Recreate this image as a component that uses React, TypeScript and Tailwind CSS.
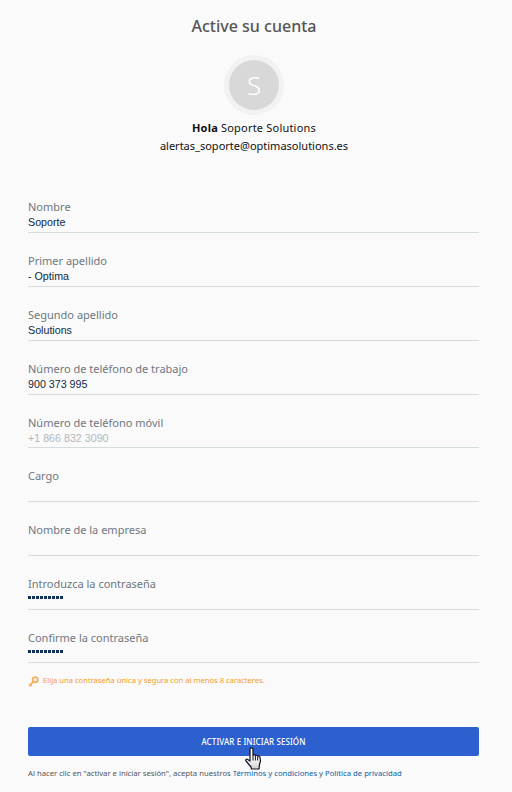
const FIELDS = [
  { label: "Nombre", value: "Soporte" },
  { label: "Primer apellido", value: "- Optima" },
  { label: "Segundo apellido", value: "Solutions" },
  { label: "Número de teléfono de trabajo", value: "900 373 995" },
  { label: "Número de teléfono móvil", placeholder: "+1 866 832 3090", short: true },
  { label: "Cargo" },
  { label: "Nombre de la empresa" },
  { label: "Introduzca la contraseña", password: true },
  { label: "Confirme la contraseña", password: true, short: true },
];

const Field: React.FC<{
  label: string;
  value?: string;
  placeholder?: string;
  password?: boolean;
  short?: boolean;
}> = ({ label, value, placeholder, password, short }) => (
  <div className={`${short ? "h-[53px]" : "h-[54px]"} pt-[20px] border-b border-[#d5dcdc] flex flex-col`}>
    <div className="h-[16px] leading-[16px] text-[11px] text-[#6f7780] font-['Noto_Sans',sans-serif]">
      {label}
    </div>
    <div className="h-[14px] leading-[14px] text-[10.7px] text-[#0f2a3f] font-['Liberation_Sans',sans-serif]">
      {value}
      {placeholder && <span className="text-[#b4b8bc]">{placeholder}</span>}
      {password && (
        <div className="flex gap-[1px] h-[14px] items-center pb-[4px]">
          {Array.from({ length: 9 }).map((_, i) => (
            <span key={i} className="w-[3px] h-[3px] bg-[#12305a]" />
          ))}
        </div>
      )}
    </div>
  </div>
);

const App = () => {
  return (
    <div className="relative w-[512px] h-[792px] overflow-hidden bg-[#fafafa] font-['Noto_Sans',sans-serif]">
      <div className="w-[508px]">
        <h1 className="pt-[16px] h-[55px] text-center text-[16px] leading-[20px] font-medium text-[#555555]">
          Active su cuenta
        </h1>
        <div className="flex justify-center">
          <div className="w-[60px] h-[60px] rounded-full bg-[#f2f2f2] flex items-center justify-center">
            <div className="w-[50px] h-[50px] rounded-full bg-[#d8d8d8] flex items-center justify-center text-white text-[26px] font-light">
              S
            </div>
          </div>
        </div>
        <p className="mt-[5px] text-center text-[11px] leading-[16px] text-[#111111] tracking-[0.2px]">
          <b className="font-bold">Hola</b> Soporte Solutions
        </p>
        <p className="mt-[2px] text-center text-[11px] leading-[16px] text-[#111111]">
          alertas_soporte@optimasolutions.es
        </p>
      </div>
      <div className="mt-[25px] mx-[28px] w-[451px]">
        {FIELDS.map((f) => (
          <Field key={f.label} {...f} />
        ))}
        <div className="mt-[12px] flex items-center gap-[4px] h-[12px] text-[7.6px] text-[#f59a23] font-['Noto_Sans',sans-serif]">
          <svg width="11" height="11" viewBox="0 0 11 11" fill="none" stroke="#f8ac5c" strokeWidth="1.8">
            <circle cx="7.2" cy="3.8" r="2.6" />
            <path d="M5.2 5.800 1 10M2.200 8.600l1.500 1.400" />
          </svg>
          <span>Elija una contraseña única y segura con al menos 8 caracteres.</span>
        </div>
        <button className="mt-[40px] w-full h-[29px] rounded-[2px] bg-[#2b60ce] text-white text-[8px] tracking-[0.1px] font-medium flex items-center justify-center">
          ACTIVAR E INICIAR SESIÓN
        </button>
        <p className="mt-[11px] whitespace-nowrap text-[7.7px] leading-[12px] text-[#555555]">
          Al hacer clic en "activar e iniciar sesión", acepta nuestros{" "}
          <span className="text-[#0b5fa5]">Términos y condiciones</span> y{" "}
          <span className="text-[#0b5fa5]">Política de privacidad</span>
        </p>
      </div>
      <svg className="absolute left-[245px] top-[747px]" width="18" height="23" viewBox="0 0 18 23">
        <defs>
          <linearGradient id="hand" x1="0" y1="0" x2="0" y2="1">
            <stop offset="0.45" stopColor="#ffffff" />
            <stop offset="1" stopColor="#cfcfcf" />
          </linearGradient>
        </defs>
        <path
          d="M5 2c0-1.600 3-1.600 3 0v6c.8-.6 2-.5 2.400.5.800-.5 2-.3 2.300.7 1-.4 2.300 0 2.300 1.300l.5 3.500-1 3.500-.5 4.500H6.500l-.5-2L1 14c-.8-1.400.6-2.500 1.800-1.500L5 14z"
          fill="url(#hand)"
          stroke="#111122"
          strokeWidth="1.200"
          strokeLinejoin="round"
        />
        <path d="M8 8v5.500M10.400 8.500v5M12.700 9.500v4" stroke="#111122" strokeWidth="1" />
      </svg>
    </div>
  );
};

export default App;
